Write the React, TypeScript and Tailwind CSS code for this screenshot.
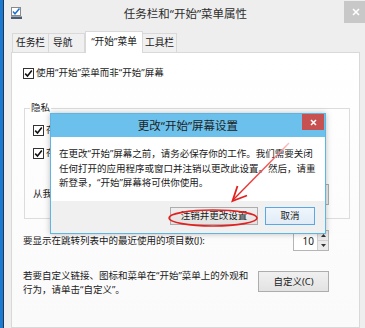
import React from "react";

function Check({ className = "" }: { className?: string }) {
  return (
    <span className={`w-[11px] h-[11px] shrink-0 border border-[#333333] bg-white flex items-center justify-center ${className}`}>
      <svg width="9" height="9" viewBox="0 0 9 9">
        <path d="M1.2 4.6 L3.5 7 L7.8 1.6" fill="none" stroke="#111" strokeWidth="1.6" />
      </svg>
    </span>
  );
}

export default function App() {
  return (
    <div className="relative w-[365px] h-[328px] overflow-hidden bg-[#1b79d0] flex font-['Noto_Sans','Noto_Sans_CJK_SC',sans-serif] text-[#1a1a1a]">
      <div className="w-[3px] shrink-0" />
      <div className="w-[1px] shrink-0 bg-[#1d3550]" />
      <div className="w-[364px] shrink-0 bg-[#eeeeee] flex flex-col">
        {/* title bar */}
        <div className="h-[31px] shrink-0 flex items-start">
          <div className="w-[7px] shrink-0" />
          <svg className="mt-[7px] shrink-0" width="11" height="12" viewBox="0 0 11 12">
            <rect x="0.5" y="0.5" width="9" height="8" fill="#ffffff" stroke="#8a8a8a" />
            <path d="M2 4.5 L4 6.8 L8.5 1.5" fill="none" stroke="#1f6fd0" strokeWidth="1.5" />
            <rect x="0" y="9.5" width="11" height="2.5" fill="#4a5a70" />
          </svg>
          <div className="flex-1 pl-[5px] pt-[6px] text-center text-[11.5px] leading-[16px] text-[#2d2d2d] whitespace-nowrap">
            任务栏和“开始”菜单属性
          </div>
          <div className="w-[24px] h-[22px] mt-[1px] shrink-0 bg-[#c8c8c8] flex items-center justify-center">
            <svg width="8" height="8" viewBox="0 0 8 8">
              <path d="M1 1 L7 7 M7 1 L1 7" stroke="#ffffff" strokeWidth="1.6" />
            </svg>
          </div>
        </div>

        {/* tabs */}
        <div className="h-[21px] shrink-0 flex items-end pl-[8px] text-[9.7px] leading-[14px]">
          <div className="w-[37px] h-[20px] -mb-[1px] border border-[#d9d9d9] bg-[#f0f0f0] flex items-center justify-center">任务栏</div>
          <div className="w-[36px] h-[20px] -mb-[1px] border border-l-0 border-[#d9d9d9] bg-[#f0f0f0] flex items-center pl-[4px]">导航</div>
          <div className="relative z-10 w-[58px] h-[22px] -mb-[1px] border border-b-0 border-[#d9d9d9] bg-white flex items-start justify-center pt-[3px]">“开始”菜单</div>
          <div className="w-[34px] h-[20px] -mb-[1px] border border-l-0 border-[#d9d9d9] bg-[#f0f0f0] flex items-center justify-center">工具栏</div>
        </div>

        {/* panel */}
        <div className="ml-[7px] w-[349px] flex-1 border border-[#d9d9d9] bg-gradient-to-b from-[#ffffff] to-[#fafafa] flex flex-col text-[9.5px] leading-[14px]">
          <div className="mt-[13px] ml-[11px] h-[14px] flex items-center gap-[2px] whitespace-nowrap">
            <Check />
            <span>使用“开始”菜单而非“开始”屏幕</span>
          </div>

          <div className="relative mt-[28px] ml-[12px] w-[326px] h-[111px] border border-[#dcdcdc] flex flex-col pl-[8px] pr-[20px] pt-[14px]">
            <span className="absolute left-[5px] -top-[8px] px-[1px] bg-white">隐私</span>
            <div className="h-[14px] flex items-center gap-[2px] whitespace-nowrap">
              <Check />
              <span>存储并显示最近在“开始”菜单中打开的程序(P)</span>
            </div>
            <div className="mt-[9px] h-[14px] flex items-center gap-[2px] whitespace-nowrap">
              <Check />
              <span>存储并显示最近在“开始”菜单和任务栏中打开的项目(M)</span>
            </div>
            <div className="mt-[24px] h-[21px] flex items-center justify-between whitespace-nowrap">
              <span className="mt-[-2px]">从我的电脑</span>
              <div className="w-[180px] h-[21px] border border-[#adadad] bg-[#ececec]" />
            </div>
          </div>

          <div className="mt-[11px] ml-[11px] w-[306px] h-[21px] flex items-center justify-between whitespace-nowrap">
            <span>要显示在跳转列表中的最近使用的项目数(J):</span>
            <div className="w-[36px] h-[21px] border border-[#b5b5b5] bg-white flex">
              <div className="flex-1 flex items-center justify-end pr-[3px] text-[10px]">10</div>
              <div className="w-[11px] flex flex-col border-l border-[#d0d0d0]">
                <div className="flex-1 bg-[#eaeaea] border-b border-[#d0d0d0] flex items-center justify-center">
                  <svg width="5" height="3" viewBox="0 0 5 3"><path d="M0 3 L2.5 0 L5 3 Z" fill="#333" /></svg>
                </div>
                <div className="flex-1 bg-[#eaeaea] flex items-center justify-center">
                  <svg width="5" height="3" viewBox="0 0 5 3"><path d="M0 0 L2.5 3 L5 0 Z" fill="#333" /></svg>
                </div>
              </div>
            </div>
          </div>

          <div className="mt-[18px] ml-[11px] w-[306px] flex items-start justify-between whitespace-nowrap">
            <span>
              若要自定义链接、图标和菜单在“开始”菜单上的外观和
              <br />
              行为，请单击“自定义”。
            </span>
            <div className="mt-[2px] w-[71px] h-[21px] border border-[#adadad] bg-gradient-to-b from-[#f0f0f0] to-[#e3e3e3] flex items-center justify-center">
              自定义(C)
            </div>
          </div>
        </div>
      </div>

      {/* modal dialog */}
      <div className="absolute left-[50px] top-[113px] w-[276px] h-[121px] border border-[#5fb5e2] bg-white flex flex-col shadow-[0_0_6px_rgba(0,0,0,0.25)]">
        <div className="relative h-[23px] shrink-0 bg-[#6bc1eb] flex items-center justify-center text-[11.5px] leading-[16px] text-[#1e1e1e] whitespace-nowrap">
          更改“开始”屏幕设置
          <div className="absolute right-[1px] top-0 w-[22px] h-[16px] bg-[#c75050] flex items-center justify-center">
            <svg width="7" height="7" viewBox="0 0 7 7">
              <path d="M1 1 L6 6 M6 1 L1 6" stroke="#ffffff" strokeWidth="1.5" />
            </svg>
          </div>
        </div>
        <div className="h-[64px] shrink-0 pl-[8px] pt-[10px] text-[9.5px] leading-[14.5px] whitespace-nowrap">
          在更改“开始”屏幕之前，请务必保存你的工作。我们需要关闭
          <br />
          任何打开的应用程序或窗口并注销以更改此设置。然后，请重
          <br />
          新登录，“开始”屏幕将可供你使用。
        </div>
        <div className="flex-1 bg-[#f0f0f0] flex justify-end items-start pt-[6px] pr-[10px] gap-[7px] text-[9.5px] leading-[14px] whitespace-nowrap">
          <div className="w-[88px] h-[18px] border border-[#adadad] bg-gradient-to-b from-[#efefef] to-[#e2e2e2] flex items-center justify-center">
            注销并更改设置
          </div>
          <div className="w-[50px] h-[18px] border border-[#5aa7e6] bg-gradient-to-b from-[#eef5fc] to-[#e1ecf7] flex items-center justify-center">
            取消
          </div>
        </div>
      </div>

      {/* red annotation */}
      <svg className="absolute inset-0 pointer-events-none" width="365" height="328" viewBox="0 0 365 328">
        <defs>
          <linearGradient id="arrowGrad" x1="289" y1="143" x2="233" y2="200" gradientUnits="userSpaceOnUse">
            <stop offset="0" stopColor="#f9c4c4" />
            <stop offset="0.35" stopColor="#ef5a5a" />
            <stop offset="1" stopColor="#e32020" />
          </linearGradient>
        </defs>
        <line x1="289" y1="143" x2="233.5" y2="199.5" stroke="url(#arrowGrad)" strokeWidth="1.4" />
        <polyline points="237.5,186 232.5,201 247,195.5" fill="none" stroke="#e32020" strokeWidth="1.8" />
        <ellipse cx="213" cy="218" rx="44" ry="8" fill="none" stroke="#e32020" strokeWidth="1.6" />
      </svg>
    </div>
  );
}
